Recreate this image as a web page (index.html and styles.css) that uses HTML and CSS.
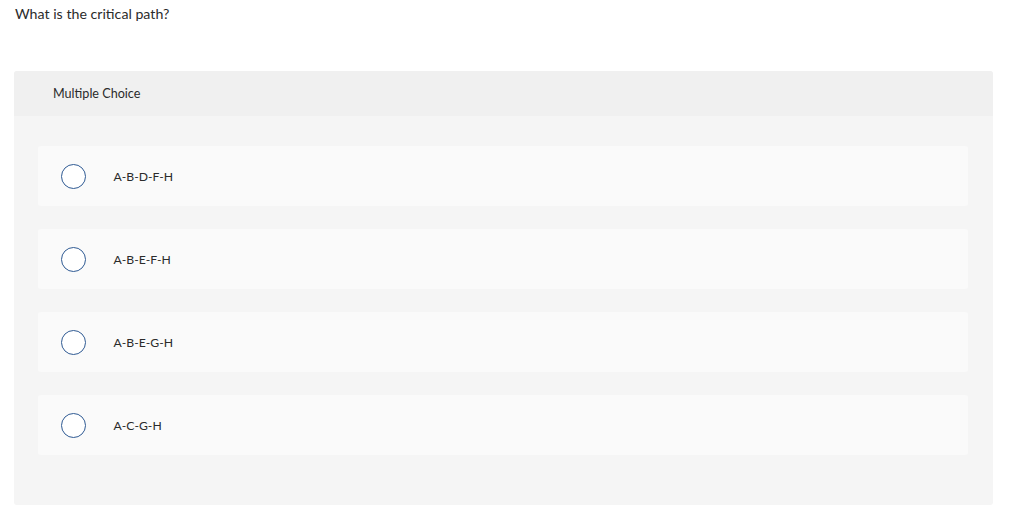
FILE: index.html
```html
<!DOCTYPE html>
<html>
<head>
<meta charset="utf-8">
<link rel="stylesheet" href="styles.css">
</head>
<body>
<div class="page">
  <p class="question">What is the critical path?</p>
  <div class="panel">
    <div class="panel-head">Multiple Choice</div>
    <div class="options">
      <div class="option"><span class="radio"></span><span class="label">A-B-D-F-H</span></div>
      <div class="option"><span class="radio"></span><span class="label">A-B-E-F-H</span></div>
      <div class="option"><span class="radio"></span><span class="label">A-B-E-G-H</span></div>
      <div class="option"><span class="radio"></span><span class="label">A-C-G-H</span></div>
    </div>
  </div>
</div>
</body>
</html>
```
FILE: styles.css
```css
html, body {
  margin: 0;
  padding: 0;
  background: #ffffff;
}
.page {
  font-family: "Lato", "Liberation Sans", sans-serif;
  color: #2b2b2b;
  padding: 0 31px 0 14px;
}
.question {
  margin: 0;
  padding: 5px 0 0 1px;
  height: 71px;
  box-sizing: border-box;
  font-size: 14.2px;
  line-height: 18px;
}
.panel {
  background: #f5f5f5;
  border-radius: 3px;
  padding-bottom: 50px;
}
.panel-head {
  background: #f0f0f0;
  height: 45px;
  box-sizing: border-box;
  padding: 15px 0 0 39px;
  font-size: 12.6px;
  line-height: 15px;
  border-radius: 3px 3px 0 0;
}
.options {
  display: flex;
  flex-direction: column;
  gap: 23px;
  padding: 30px 25px 0 24px;
}
.option {
  display: flex;
  align-items: center;
  height: 60px;
  background: #fafafa;
  border-radius: 3px;
  padding-left: 23px;
}
.radio {
  width: 23px;
  height: 23px;
  border: 1.3px solid #2f5a93;
  border-radius: 50%;
  background: #ffffff;
  flex-shrink: 0;
}
.label {
  margin-left: 27.5px;
  font-size: 12.2px;
  color: #2b2b2b;
}
```
